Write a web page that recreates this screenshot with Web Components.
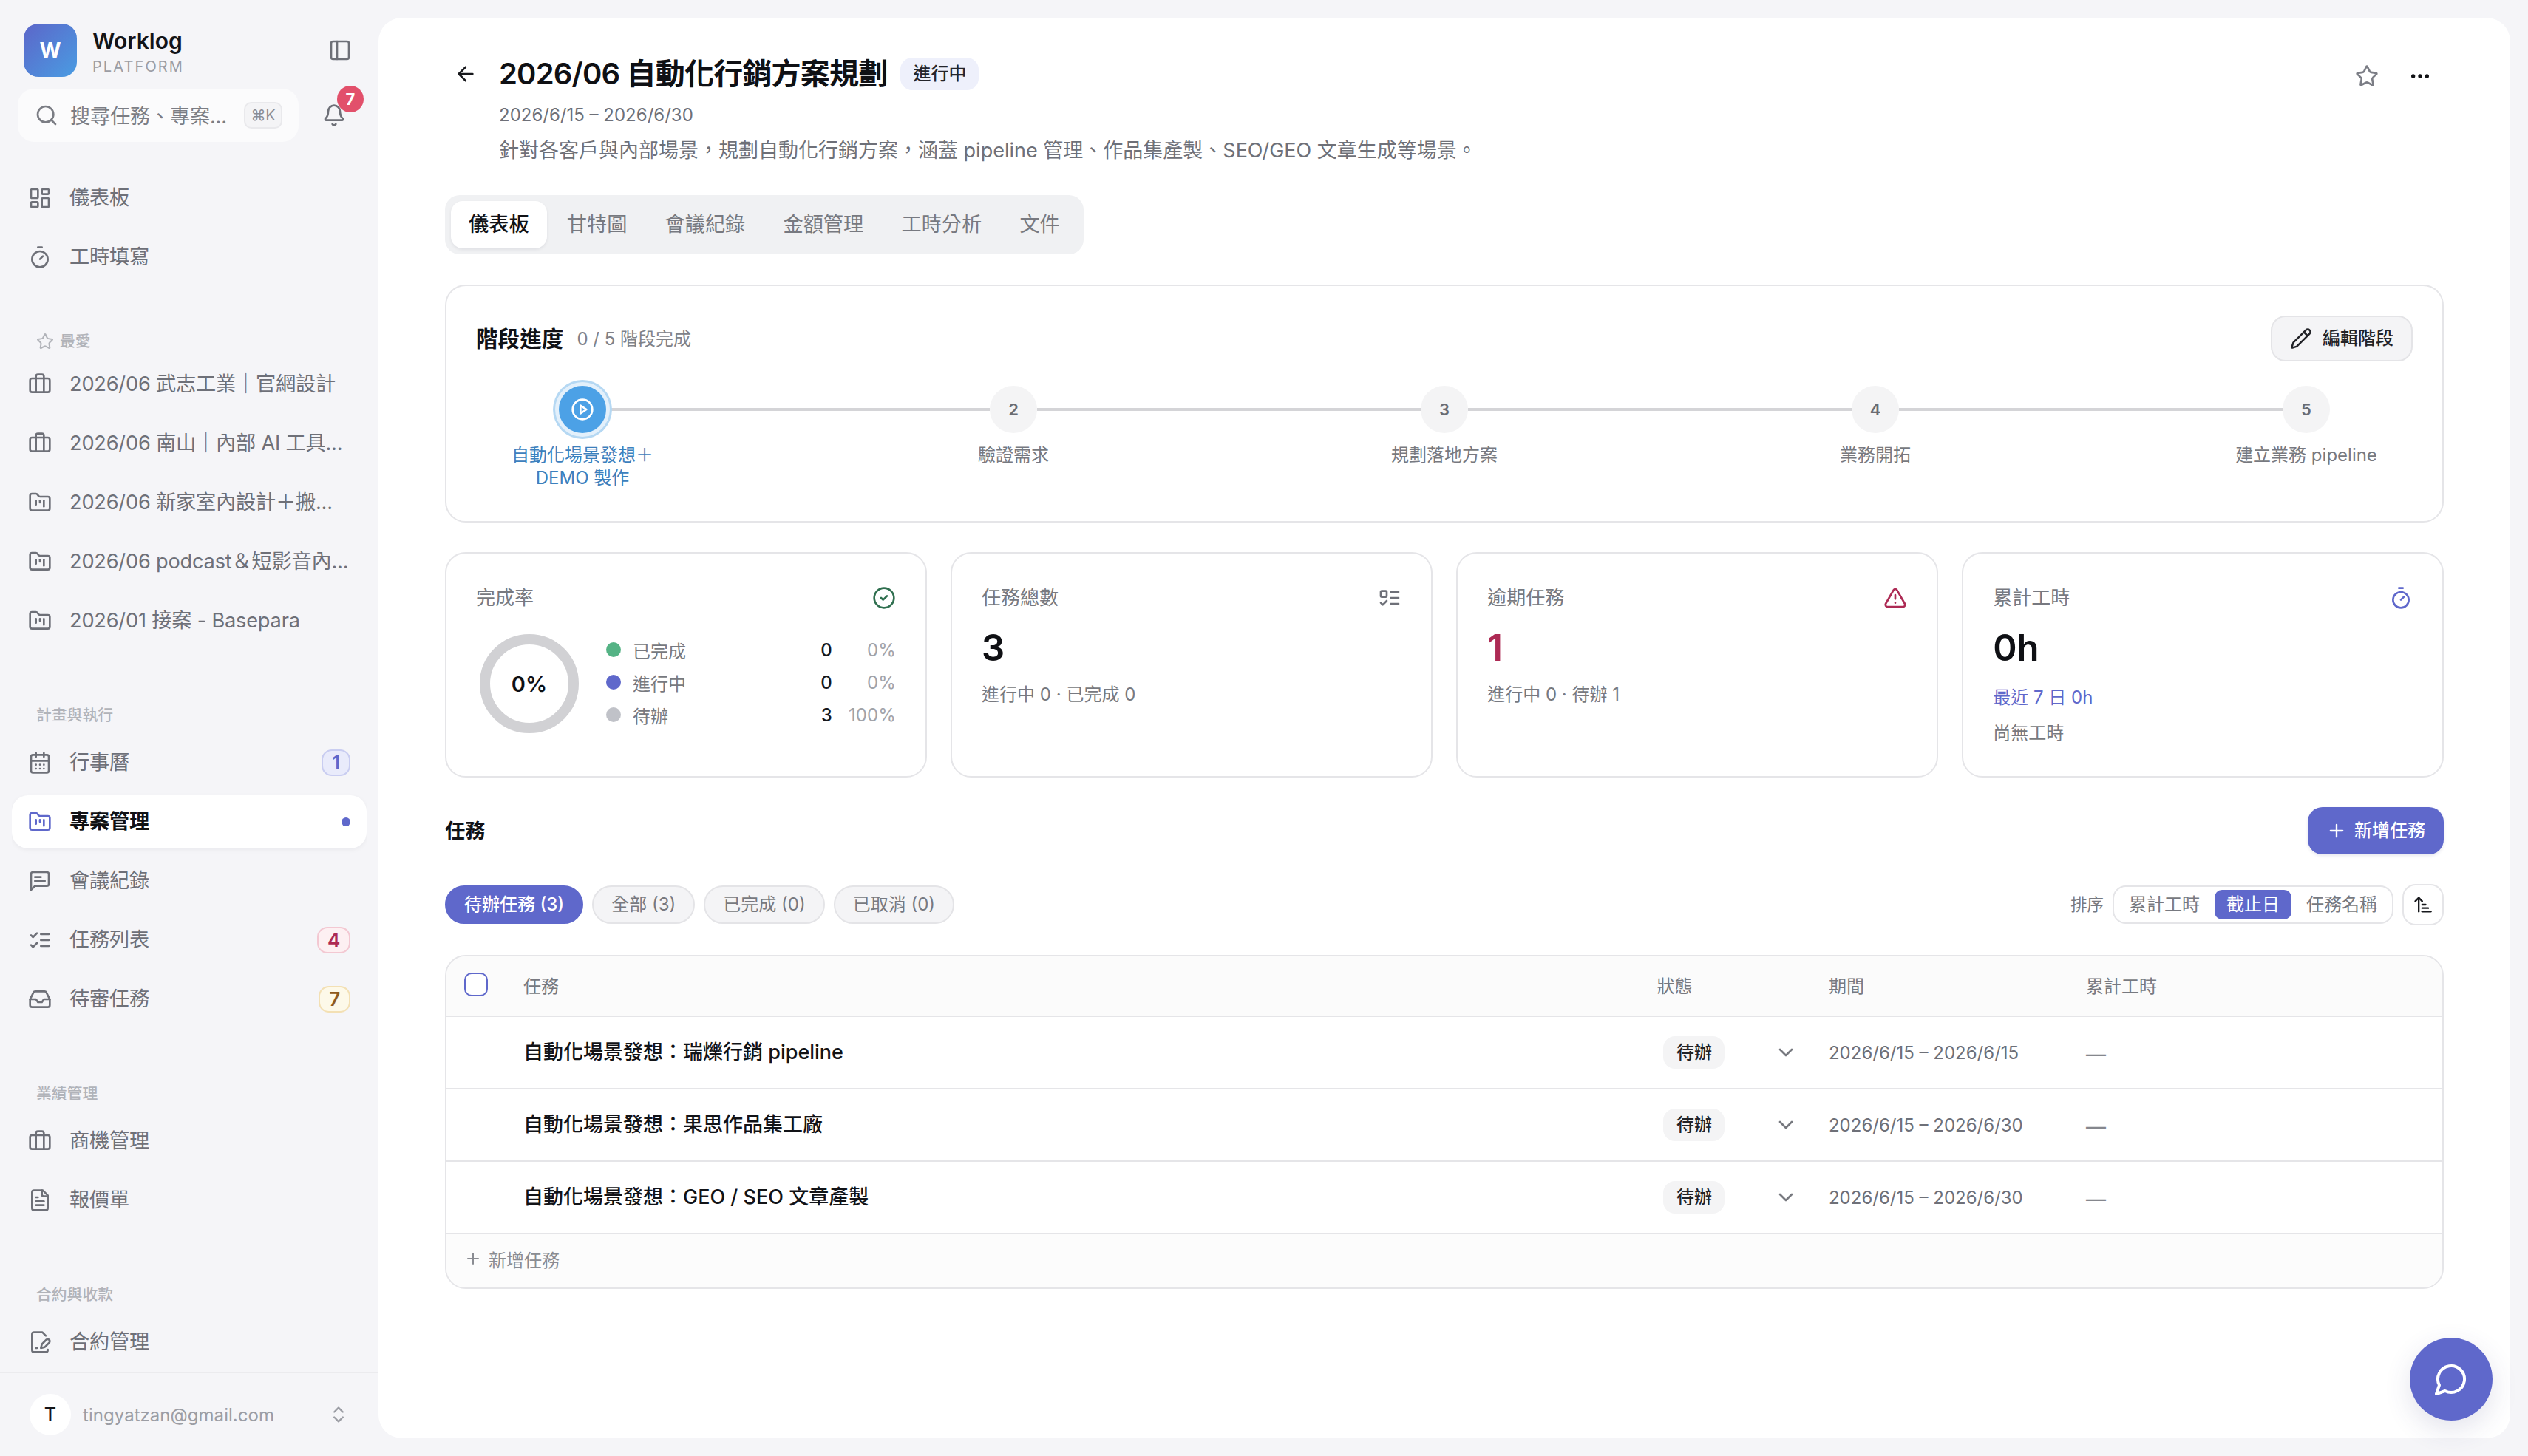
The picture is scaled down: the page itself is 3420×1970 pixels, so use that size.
<!DOCTYPE html>
<html lang="zh-Hant">
<head>
<meta charset="utf-8">
<title>Worklog</title>
<style>
  html { zoom: 2; }
  body {
    margin: 0;
    background: #f5f5f8;
    color: #111216;
    font-family: Inter, "Noto Sans CJK TC", sans-serif;
  }
</style>
</head>
<body>
<wl-app></wl-app>
<script>
const ICONS = {
  panel: '<rect x="3" y="3" width="18" height="18" rx="2"/><path d="M9 3v18"/>',
  search: '<circle cx="11" cy="11" r="8"/><path d="m21 21-4.3-4.3"/>',
  bell: '<path d="M10.268 21a2 2 0 0 0 3.464 0"/><path d="M3.262 15.326A1 1 0 0 0 4 17h16a1 1 0 0 0 .74-1.673C19.41 13.956 18 12.499 18 8A6 6 0 0 0 6 8c0 4.499-1.411 5.956-2.738 7.326"/>',
  dashboard: '<rect x="3" y="3" width="7" height="9" rx="1"/><rect x="14" y="3" width="7" height="5" rx="1"/><rect x="14" y="12" width="7" height="9" rx="1"/><rect x="3" y="16" width="7" height="5" rx="1"/>',
  timer: '<path d="M10 2h4"/><path d="m12 14 3-3"/><circle cx="12" cy="14" r="8"/>',
  star: '<path d="M11.525 2.295a.53.53 0 0 1 .95 0l2.31 4.679a2.123 2.123 0 0 0 1.595 1.16l5.166.756a.53.53 0 0 1 .294.904l-3.736 3.638a2.123 2.123 0 0 0-.611 1.878l.882 5.14a.53.53 0 0 1-.771.56l-4.618-2.428a2.122 2.122 0 0 0-1.973 0L6.396 21.01a.53.53 0 0 1-.77-.56l.881-5.139a2.122 2.122 0 0 0-.611-1.879L2.16 9.795a.53.53 0 0 1 .294-.906l5.165-.755a2.122 2.122 0 0 0 1.597-1.16z"/>',
  briefcase: '<rect x="2" y="6" width="20" height="14" rx="2"/><path d="M16 20V4a2 2 0 0 0-2-2h-4a2 2 0 0 0-2 2v16"/>',
  folder: '<path d="M4 20h16a2 2 0 0 0 2-2V8a2 2 0 0 0-2-2h-7.93a2 2 0 0 1-1.66-.9l-.82-1.2A2 2 0 0 0 7.93 3H4a2 2 0 0 0-2 2v13c0 1.1.9 2 2 2Z"/><path d="M8 10v4"/><path d="M12 10v2"/><path d="M16 10v6"/>',
  calendar: '<path d="M8 2v4"/><path d="M16 2v4"/><rect x="3" y="4" width="18" height="18" rx="2"/><path d="M3 10h18"/><path d="M8 14h.01"/><path d="M12 14h.01"/><path d="M16 14h.01"/><path d="M8 18h.01"/><path d="M12 18h.01"/><path d="M16 18h.01"/>',
  message: '<path d="M21 15a2 2 0 0 1-2 2H7l-4 4V5a2 2 0 0 1 2-2h14a2 2 0 0 1 2 2z"/><path d="M13 8H7"/><path d="M17 12H7"/>',
  checks: '<path d="m3 17 2 2 4-4"/><path d="m3 7 2 2 4-4"/><path d="M13 6h8"/><path d="M13 12h8"/><path d="M13 18h8"/>',
  inbox: '<path d="M22 12h-6l-2 3h-4l-2-3H2"/><path d="M5.45 5.11 2 12v6a2 2 0 0 0 2 2h16a2 2 0 0 0 2-2v-6l-3.45-6.89A2 2 0 0 0 16.76 4H7.24a2 2 0 0 0-1.79 1.11z"/>',
  file: '<path d="M15 2H6a2 2 0 0 0-2 2v16a2 2 0 0 0 2 2h12a2 2 0 0 0 2-2V7Z"/><path d="M14 2v4a2 2 0 0 0 2 2h4"/><path d="M10 9H8"/><path d="M16 13H8"/><path d="M16 17H8"/>',
  signature: '<path d="M20 19.5v.5a2 2 0 0 1-2 2H6a2 2 0 0 1-2-2V4a2 2 0 0 1 2-2h8.5L18 5.5"/><path d="M8 18h1"/><path d="M18.42 9.61a2.1 2.1 0 1 1 2.97 2.97L16.95 17 13 18l.99-3.95 4.43-4.44Z"/>',
  updown: '<path d="m7 15 5 5 5-5"/><path d="m7 9 5-5 5 5"/>',
  back: '<path d="m12 19-7-7 7-7"/><path d="M19 12H5"/>',
  dots: '<circle cx="12" cy="12" r="1"/><circle cx="19" cy="12" r="1"/><circle cx="5" cy="12" r="1"/>',
  pencil: '<path d="M21.174 6.812a1 1 0 0 0-3.986-3.987L3.842 16.174a2 2 0 0 0-.5.83l-1.321 4.352a.5.5 0 0 0 .623.622l4.353-1.32a2 2 0 0 0 .83-.497z"/><path d="m15 5 4 4"/>',
  play: '<circle cx="12" cy="12" r="10"/><path d="m10 8 6 4-6 4z"/>',
  check: '<circle cx="12" cy="12" r="10"/><path d="m9 12 2 2 4-4"/>',
  todo: '<rect x="3" y="5" width="6" height="6" rx="1"/><path d="m3 17 2 2 4-4"/><path d="M13 6h8"/><path d="M13 12h8"/><path d="M13 18h8"/>',
  alert: '<path d="m21.73 18-8-14a2 2 0 0 0-3.48 0l-8 14A2 2 0 0 0 4 21h16a2 2 0 0 0 1.73-3"/><path d="M12 9v4"/><path d="M12 17h.01"/>',
  plus: '<path d="M5 12h14"/><path d="M12 5v14"/>',
  down: '<path d="m6 9 6 6 6-6"/>',
  sort: '<path d="m3 8 4-4 4 4"/><path d="M7 4v16"/><path d="M11 12h4"/><path d="M11 16h7"/><path d="M11 20h10"/>',
  chat: '<path d="M7.9 20A9 9 0 1 0 4 16.1L2 22Z"/>'
};

class WlIcon extends HTMLElement {
  connectedCallback() {
    const size = this.getAttribute('size') || 16;
    const name = this.getAttribute('name');
    this.attachShadow({ mode: 'open' });
    this.shadowRoot.innerHTML = `
      <style>
        :host { display: inline-flex; flex: none; width: ${size}px; height: ${size}px; }
        svg { display: block; }
      </style>
      <svg width="${size}" height="${size}" viewBox="0 0 24 24" fill="none" stroke="currentColor"
        stroke-width="${this.getAttribute('stroke') || 2}" stroke-linecap="round" stroke-linejoin="round">${ICONS[name] || ''}</svg>`;
  }
}

class WlNavItem extends HTMLElement {
  connectedCallback() {
    const active = this.hasAttribute('active');
    const badge = this.getAttribute('badge');
    const tone = this.getAttribute('tone') || 'indigo';
    this.attachShadow({ mode: 'open' });
    this.shadowRoot.innerHTML = `
      <style>
        :host {
          display: flex; align-items: center; height: 36px; margin: 0 0 4px;
          padding: 0 11px; gap: 12px; border-radius: 11px;
          font-size: 13.6px; letter-spacing: -.1px; line-height: 20px; color: #6e7078; white-space: nowrap;
        }
        :host([active]) { background: #fff; color: #101114; font-weight: 600; box-shadow: 0 1px 3px rgba(20,20,40,.05); }
        :host([active]) wl-icon { color: #5f68cb; }
        .label { flex: 1; min-width: 0; }
        .dot { width: 6px; height: 6px; border-radius: 50%; background: #5f68cb; }
        .badge {
          height: 16px; padding: 0 6px; border: 1px solid; border-radius: 7px;
          font-size: 13px; line-height: 16px; font-weight: 600;
        }
        .indigo { background: #e9ebfb; border-color: #c9cdf1; color: #5f68cb; }
        .red { background: #fdf0f2; border-color: #f3c8d2; color: #ad2a54; }
        .amber { background: #fdf9e9; border-color: #f3e0b4; color: #8f5a20; }
      </style>
      <wl-icon name="${this.getAttribute('icon')}"></wl-icon>
      <span class="label"><slot></slot></span>
      ${active ? '<span class="dot"></span>' : ''}
      ${badge ? `<span class="badge ${tone}">${badge}</span>` : ''}`;
  }
}

class WlSectionLabel extends HTMLElement {
  connectedCallback() {
    this.attachShadow({ mode: 'open' });
    this.shadowRoot.innerHTML = `
      <style>
        :host {
          display: flex; align-items: center; gap: 4px; height: 16px; padding-left: 16.5px;
          margin: 38px 0 6px; font-size: 10.4px; line-height: 16px; font-weight: 500; color: #b1b3b9;
        }
      </style>
      <slot name="icon"></slot><slot></slot>`;
  }
}

class WlSidebar extends HTMLElement {
  connectedCallback() {
    this.attachShadow({ mode: 'open' });
    this.shadowRoot.innerHTML = `
      <style>
        :host { display: flex; flex-direction: column; width: 256px; height: 985px; flex: none; overflow: hidden; }
        .brand { display: flex; align-items: center; height: 36px; margin: 16px 0 8px 16px; }
        .logo {
          display: flex; align-items: center; justify-content: center; width: 36px; height: 36px;
          border-radius: 10px; background: linear-gradient(135deg, #5c66c9, #4a9ce2);
          color: #fff; font-size: 14px; font-weight: 700;
        }
        .name { flex: 1; margin-left: 10.5px; }
        .title { font-size: 15px; line-height: 19px; font-weight: 600; color: #131418; margin-top: 1px; }
        .sub { font-size: 10px; line-height: 13px; letter-spacing: 1.05px; color: #9b9da4; margin-top: 1.5px; }
        .toggle { color: #6e7078; margin-right: 18px; }
        .tools { display: flex; align-items: center; height: 36px; margin-left: 12px; }
        .search {
          display: flex; align-items: center; width: 190px; height: 36px; box-sizing: border-box;
          padding: 0 11px 0 11.5px; border-radius: 11px; background: #fbfbfc;
          font-size: 13.6px; letter-spacing: -.1px; color: #7b7d84; white-space: nowrap;
        }
        .search span { flex: 1; margin-left: 8px; padding-bottom: 1px; }
        kbd {
          width: 26px; height: 18px; box-sizing: border-box; border: 1px solid #e9e9ec; border-radius: 5px;
          background: #f4f4f6; font: 10px/16px Inter, "Noto Sans CJK TC", sans-serif; text-align: center; color: #8b8d94;
        }
        .bell { position: relative; display: flex; margin-left: 16px; color: #6e7078; }
        .count {
          position: absolute; left: 10px; top: -12px; width: 18px; height: 18px; border-radius: 50%;
          background: #e2506b; color: #fff; font-size: 11px; line-height: 18px; font-weight: 700; text-align: center;
        }
        nav { flex: 1; min-height: 0; overflow: hidden; margin: 20px 8px 0; }
        .fav { margin-top: 31px; margin-bottom: 3px; padding-left: 16.5px; color: #b1b3b9; }
        footer {
          display: flex; align-items: center; height: 56px; border-top: 1px solid #ebebee;
          padding-left: 20px; font-size: 12px; color: #9b9da4;
        }
        .avatar {
          display: flex; align-items: center; justify-content: center; width: 28px; height: 28px;
          border-radius: 50%; background: #fff; color: #141519; font-size: 12.5px; font-weight: 500;
        }
        .mail { flex: 1; margin-left: 8px; letter-spacing: .02px; }
        footer wl-icon { margin-right: 20px; }
      </style>
      <div class="brand">
        <div class="logo">W</div>
        <div class="name"><div class="title">Worklog</div><div class="sub">PLATFORM</div></div>
        <wl-icon class="toggle" name="panel"></wl-icon>
      </div>
      <div class="tools">
        <div class="search"><wl-icon name="search"></wl-icon><span>搜尋任務、專案...</span><kbd>⌘K</kbd></div>
        <div class="bell"><wl-icon name="bell"></wl-icon><div class="count">7</div></div>
      </div>
      <nav>
        <wl-nav-item icon="dashboard">儀表板</wl-nav-item>
        <wl-nav-item icon="timer">工時填寫</wl-nav-item>
        <wl-section-label class="fav"><wl-icon slot="icon" name="star" size="12"></wl-icon>最愛</wl-section-label>
        <wl-nav-item icon="briefcase">2026/06 武志工業｜官網設計</wl-nav-item>
        <wl-nav-item icon="briefcase">2026/06 南山｜內部 AI 工具...</wl-nav-item>
        <wl-nav-item icon="folder">2026/06 新家室內設計＋搬...</wl-nav-item>
        <wl-nav-item icon="folder">2026/06 podcast＆短影音內...</wl-nav-item>
        <wl-nav-item icon="folder">2026/01 接案 - Basepara</wl-nav-item>
        <wl-section-label>計畫與執行</wl-section-label>
        <wl-nav-item icon="calendar" badge="1">行事曆</wl-nav-item>
        <wl-nav-item icon="folder" active>專案管理</wl-nav-item>
        <wl-nav-item icon="message">會議紀錄</wl-nav-item>
        <wl-nav-item icon="checks" badge="4" tone="red">任務列表</wl-nav-item>
        <wl-nav-item icon="inbox" badge="7" tone="amber">待審任務</wl-nav-item>
        <wl-section-label>業績管理</wl-section-label>
        <wl-nav-item icon="briefcase">商機管理</wl-nav-item>
        <wl-nav-item icon="file">報價單</wl-nav-item>
        <wl-section-label>合約與收款</wl-section-label>
        <wl-nav-item icon="signature">合約管理</wl-nav-item>
      </nav>
      <footer>
        <div class="avatar">T</div>
        <div class="mail">tingyatzan@gmail.com</div>
        <wl-icon name="updown" size="14"></wl-icon>
      </footer>`;
  }
}

class WlStageCard extends HTMLElement {
  connectedCallback() {
    const steps = ['驗證需求', '規劃落地方案', '業務開拓', '建立業務 pipeline'];
    const circles = steps.map((_, i) => `<i></i><div class="circle">${i + 2}</div>`).join('');
    const labels = steps.map(s => `<div class="label">${s}</div>`).join('');
    this.attachShadow({ mode: 'open' });
    this.shadowRoot.innerHTML = `
      <style>
        :host {
          display: block; border: 1px solid #e5e5e8; border-radius: 14px; padding: 20px;
          height: 119px; margin-top: 20.5px;
        }
        header { display: flex; align-items: center; height: 31px; }
        h2 { margin: 0; font-size: 14.8px; line-height: 20px; font-weight: 600; color: #111216; }
        .count { flex: 1; margin-left: 9px; font-size: 12px; line-height: 20px; color: #808289; padding-top: 1px; }
        button {
          display: flex; align-items: center; gap: 7px; height: 31px; width: 96px; box-sizing: border-box;
          padding: 0 0 0 12px; border: 1px solid #e4e4e7; border-radius: 10px; background: #f4f4f6;
          font: 500 12px/16px Inter, "Noto Sans CJK TC", sans-serif; color: #222328;
        }
        .track { display: flex; align-items: center; padding: 0 56px; margin-top: 16.5px; }
        .track i { flex: 1; height: 2px; background: #d4d4d7; }
        .circle {
          position: relative; display: flex; align-items: center; justify-content: center;
          width: 32px; height: 32px; border-radius: 50%; background: #f4f4f5;
          font-size: 11px; font-weight: 600; color: #6a6c73;
        }
        .circle.now { background: #4ca1e6; color: #fff; box-shadow: 0 0 0 2.5px #e3f0fb, 0 0 0 4px #b5d8f3; }
        .labels { display: flex; justify-content: space-between; margin-top: 7px; padding: 0 .5px; }
        .label { width: 143px; font-size: 12px; line-height: 15.5px; text-align: center; color: #777980; }
        .label.now { color: #3c80bd; padding: 0 22px; box-sizing: border-box; }
      </style>
      <header>
        <h2>階段進度</h2>
        <div class="count">0 / 5 階段完成</div>
        <button><wl-icon name="pencil" size="15"></wl-icon>編輯階段</button>
      </header>
      <div class="track"><div class="circle now"><wl-icon name="play" size="16"></wl-icon></div>${circles}</div>
      <div class="labels"><div class="label now">自動化場景發想＋ DEMO 製作</div>${labels}</div>`;
  }
}

class WlStatCard extends HTMLElement {
  connectedCallback() {
    const color = this.getAttribute('color') || '#6e7078';
    const value = this.getAttribute('value');
    const valueColor = this.getAttribute('value-color') || '#0f1014';
    this.attachShadow({ mode: 'open' });
    this.shadowRoot.innerHTML = `
      <style>
        :host { display: block; border: 1px solid #e5e5e8; border-radius: 14px; padding: 20px; min-width: 0; }
        .head { display: flex; align-items: center; justify-content: space-between; height: 20px; font-size: 13px; line-height: 20px; color: #777980; }
        .head wl-icon { color: ${color}; }
        .value { margin-top: 8px; height: 32px; font-size: 24.5px; line-height: 32px; font-weight: 600; color: ${valueColor}; }
      </style>
      <div class="head"><span>${this.getAttribute('label')}</span><wl-icon name="${this.getAttribute('icon')}"></wl-icon></div>
      ${value ? `<div class="value">${value}</div>` : ''}
      <slot></slot>`;
  }
}

class WlCompletion extends HTMLElement {
  connectedCallback() {
    const rows = [
      ['已完成', '#55b385', 0, '0%'],
      ['進行中', '#5f68cb', 0, '0%'],
      ['待辦', '#c0c2c8', 3, '100%']
    ];
    this.attachShadow({ mode: 'open' });
    this.shadowRoot.innerHTML = `
      <style>
        :host { display: flex; align-items: center; margin: 14.5px 0 0 2.5px; }
        .ring {
          display: flex; align-items: center; justify-content: center; flex: none;
          width: 67px; height: 67px; box-sizing: border-box; border: 7px solid #d1d1d4; border-radius: 50%;
          font-size: 14.5px; font-weight: 600; color: #0f1014;
        }
        .rows { flex: 1; margin: -2px 0 0 18.5px; }
        .row { display: flex; align-items: center; height: 22px; font-size: 12px; color: #777980; }
        .dot { width: 10px; height: 10px; border-radius: 50%; margin-right: 8px; }
        .name { flex: 1; }
        .num { color: #16171b; font-weight: 500; }
        .pct { width: 43px; text-align: right; color: #a1a3a9; }
      </style>
      <div class="ring">0%</div>
      <div class="rows">${rows.map(([name, color, num, pct]) => `
        <div class="row"><span class="dot" style="background:${color}"></span><span class="name">${name}</span><span class="num">${num}</span><span class="pct">${pct}</span></div>`).join('')}
      </div>`;
  }
}

class WlTaskRow extends HTMLElement {
  connectedCallback() {
    this.attachShadow({ mode: 'open' });
    this.shadowRoot.innerHTML = `
      <style>
        :host {
          display: grid; grid-template-columns: 52px 766.7px 116.3px 174px 1fr; align-items: center;
          height: 48px; border-bottom: 1px solid #e5e5e8; font-size: 12px; color: #6e7078;
        }
        .name { grid-column: 2; font-size: 13.5px; line-height: 20px; font-weight: 500; color: #121317; }
        .status { display: flex; align-items: center; }
        .pill {
          width: 41.5px; height: 22px; margin-left: 4.5px; border-radius: 8px; background: #f4f4f5;
          text-align: center; line-height: 22px; font-weight: 500; color: #222328;
        }
        .status wl-icon { margin-left: auto; margin-right: 21px; color: #77797f; }
        .dash { color: #85878d; font-size: 13.5px; padding-top: 2px; }
      </style>
      <div class="name"><slot></slot></div>
      <div class="status"><div class="pill">待辦</div><wl-icon name="down" size="16"></wl-icon></div>
      <div>${this.getAttribute('period')}</div>
      <div class="dash">—</div>`;
  }
}

class WlTaskTable extends HTMLElement {
  connectedCallback() {
    this.attachShadow({ mode: 'open' });
    this.shadowRoot.innerHTML = `
      <style>
        :host { display: block; margin-top: 20px; border: 1px solid #e5e5e8; border-radius: 14px; overflow: hidden; }
        .head {
          display: grid; grid-template-columns: 52px 766.7px 116.3px 174px 1fr; align-items: center;
          height: 38px; padding-bottom: 2px; border-bottom: 1px solid #e5e5e8; background: #fbfbfb; font-size: 12px; color: #777980;
        }
        .box { width: 16px; height: 16px; box-sizing: border-box; margin-left: 12px; border: 1px solid #5f68cb; border-radius: 5px; background: #fff; }
        .add {
          display: flex; align-items: center; gap: 4.5px; height: 33px; padding: 0 0 3px 12px;
          background: #fcfcfc; font-size: 12px; color: #8a8c92;
        }
      </style>
      <div class="head"><div class="box"></div><div>任務</div><div>狀態</div><div>期間</div><div>累計工時</div></div>
      <slot></slot>
      <div class="add"><wl-icon name="plus" size="12"></wl-icon>新增任務</div>`;
  }
}

class WlTaskBar extends HTMLElement {
  connectedCallback() {
    const pills = ['待辦任務 (3)', '全部 (3)', '已完成 (0)', '已取消 (0)'];
    this.attachShadow({ mode: 'open' });
    this.shadowRoot.innerHTML = `
      <style>
        :host { display: block; margin-top: 20px; font-size: 12px; line-height: 16px; }
        .top { display: flex; align-items: center; justify-content: space-between; height: 32px; }
        h3 { margin: 0; padding-top: 1px; font-size: 13.6px; line-height: 20px; font-weight: 600; color: #111216; }
        .new {
          display: flex; align-items: center; justify-content: center; gap: 5px; width: 92px; height: 32px;
          border-radius: 10px; background: #5f68cb; color: #fff; font-weight: 500; box-shadow: 0 1px 2px rgba(60,60,120,.12);
        }
        .filters { display: flex; align-items: center; height: 28px; margin-top: 20px; }
        .pills { display: flex; flex: 1; gap: 6px; }
        .pill {
          height: 24px; line-height: 24px; padding: 0 12px; border: 1px solid #e4e4e7; border-radius: 13px;
          background: #f4f4f6; color: #777980;
        }
        .pill.on { background: #5f68cb; border-color: #5f68cb; color: #fff; font-weight: 500; }
        .sort-label { color: #777980; font-size: 11.2px; margin-right: 6px; }
        .seg { display: flex; gap: 2px; height: 20px; padding: 2px; border: 1px solid #e5e5e8; border-radius: 9px; }
        .seg div { padding: 0 8px; line-height: 20px; border-radius: 5px; color: #777980; }
        .seg .on { background: #5f68cb; color: #fff; }
        .dir {
          display: flex; align-items: center; justify-content: center; width: 26px; height: 26px; margin-left: 6px;
          border: 1px solid #e5e5e8; border-radius: 9px; color: #17181c;
        }
      </style>
      <div class="top"><h3>任務</h3><div class="new"><wl-icon name="plus" size="14"></wl-icon>新增任務</div></div>
      <div class="filters">
        <div class="pills">${pills.map((p, i) => `<div class="pill ${i === 0 ? 'on' : ''}">${p}</div>`).join('')}</div>
        <span class="sort-label">排序</span>
        <div class="seg"><div>累計工時</div><div class="on">截止日</div><div>任務名稱</div></div>
        <div class="dir"><wl-icon name="sort" size="14"></wl-icon></div>
      </div>`;
  }
}

class WlProjectPage extends HTMLElement {
  connectedCallback() {
    const tabs = ['儀表板', '甘特圖', '會議紀錄', '金額管理', '工時分析', '文件'];
    this.attachShadow({ mode: 'open' });
    this.shadowRoot.innerHTML = `
      <style>
        :host {
          position: relative; display: block; flex: none; box-sizing: border-box; width: 1442px; height: 961px;
          margin-top: 12px; padding: 24px 45px 0 45px; background: #fff; border-radius: 16px;
        }
        .title-row { display: flex; align-items: center; height: 28px; }
        .back { display: flex; align-items: center; justify-content: center; width: 28px; height: 28px; margin-right: 8.5px; color: #17181c; }
        h1 { margin: 0; font-size: 20px; letter-spacing: -.4px; line-height: 28px; font-weight: 600; color: #0f1014; white-space: nowrap; }
        .state {
          height: 22px; margin-left: 9px; padding: 0 8.5px; border-radius: 8px; background: #eef0fb;
          font-size: 12px; line-height: 22px; font-weight: 500; color: #24252b;
        }
        .actions { display: flex; gap: 8px; margin-left: auto; margin-top: 3px; margin-right: 2px; }
        .act { display: flex; align-items: center; justify-content: center; width: 28px; height: 28px; }
        .meta { padding-left: 36.5px; color: #6e7078; }
        .dates { margin-top: 5px; font-size: 12px; line-height: 18px; }
        .desc { margin-top: 5px; font-size: 13.5px; line-height: 20px; }
        .tabs {
          display: inline-flex; gap: 1.6px; height: 32px; margin-top: 20px; padding: 4px;
          border-radius: 10px; background: #f0f1f3; font-size: 13.6px; line-height: 32px; color: #777980;
        }
        .tabs div { padding: 0 12px; border-radius: 8px; }
        .tabs .on { background: #fff; color: #111216; font-weight: 500; box-shadow: 0 1px 2px rgba(20,20,40,.07); }
        .stats { display: grid; grid-template-columns: repeat(4, 1fr); gap: 16.2px; margin-top: 20px; }
        .sub { margin-top: 6.5px; font-size: 12px; line-height: 18px; color: #777980; }
        .sub.week { margin-top: 8.5px; color: #5f68cb; }
        .sub + .sub { margin-top: 6px; }
        .fab {
          position: absolute; right: 12px; bottom: 12px; display: flex; align-items: center; justify-content: center;
          width: 56px; height: 56px; border-radius: 50%; background: #5f68cb; color: #fff;
          box-shadow: 0 6px 18px rgba(60,60,120,.14);
        }
      </style>
      <div class="title-row">
        <div class="back"><wl-icon name="back"></wl-icon></div>
        <h1>2026/06 自動化行銷方案規劃</h1>
        <div class="state">進行中</div>
        <div class="actions">
          <div class="act" style="color:#7b7d85"><wl-icon name="star"></wl-icon></div>
          <div class="act" style="color:#101114"><wl-icon name="dots"></wl-icon></div>
        </div>
      </div>
      <div class="meta dates">2026/6/15 – 2026/6/30</div>
      <div class="meta desc">針對各客戶與內部場景，規劃自動化行銷方案，涵蓋 pipeline 管理、作品集產製、SEO/GEO 文章生成等場景。</div>
      <div class="tabs">${tabs.map((t, i) => `<div class="${i === 0 ? 'on' : ''}">${t}</div>`).join('')}</div>
      <wl-stage-card></wl-stage-card>
      <div class="stats">
        <wl-stat-card label="完成率" icon="check" color="#2f6f4f"><wl-completion></wl-completion></wl-stat-card>
        <wl-stat-card label="任務總數" icon="todo" value="3"><div class="sub">進行中 0 · 已完成 0</div></wl-stat-card>
        <wl-stat-card label="逾期任務" icon="alert" color="#ad2a54" value="1" value-color="#ad2a54"><div class="sub">進行中 0 · 待辦 1</div></wl-stat-card>
        <wl-stat-card label="累計工時" icon="timer" color="#5f68cb" value="0h">
          <div class="sub week">最近 7 日 0h</div><div class="sub">尚無工時</div>
        </wl-stat-card>
      </div>
      <wl-task-bar></wl-task-bar>
      <wl-task-table>
        <wl-task-row period="2026/6/15 – 2026/6/15">自動化場景發想：瑞爍行銷 pipeline</wl-task-row>
        <wl-task-row period="2026/6/15 – 2026/6/30">自動化場景發想：果思作品集工廠</wl-task-row>
        <wl-task-row period="2026/6/15 – 2026/6/30">自動化場景發想：GEO / SEO 文章產製</wl-task-row>
      </wl-task-table>
      <div class="fab"><wl-icon name="chat" size="24"></wl-icon></div>`;
  }
}

class WlApp extends HTMLElement {
  connectedCallback() {
    this.attachShadow({ mode: 'open' });
    this.shadowRoot.innerHTML = `
      <style>:host { display: flex; width: 1710px; height: 985px; overflow: hidden; }</style>
      <wl-sidebar></wl-sidebar>
      <wl-project-page></wl-project-page>`;
  }
}

customElements.define('wl-icon', WlIcon);
customElements.define('wl-nav-item', WlNavItem);
customElements.define('wl-section-label', WlSectionLabel);
customElements.define('wl-sidebar', WlSidebar);
customElements.define('wl-stage-card', WlStageCard);
customElements.define('wl-stat-card', WlStatCard);
customElements.define('wl-completion', WlCompletion);
customElements.define('wl-task-row', WlTaskRow);
customElements.define('wl-task-table', WlTaskTable);
customElements.define('wl-task-bar', WlTaskBar);
customElements.define('wl-project-page', WlProjectPage);
customElements.define('wl-app', WlApp);
</script>
</body>
</html>
